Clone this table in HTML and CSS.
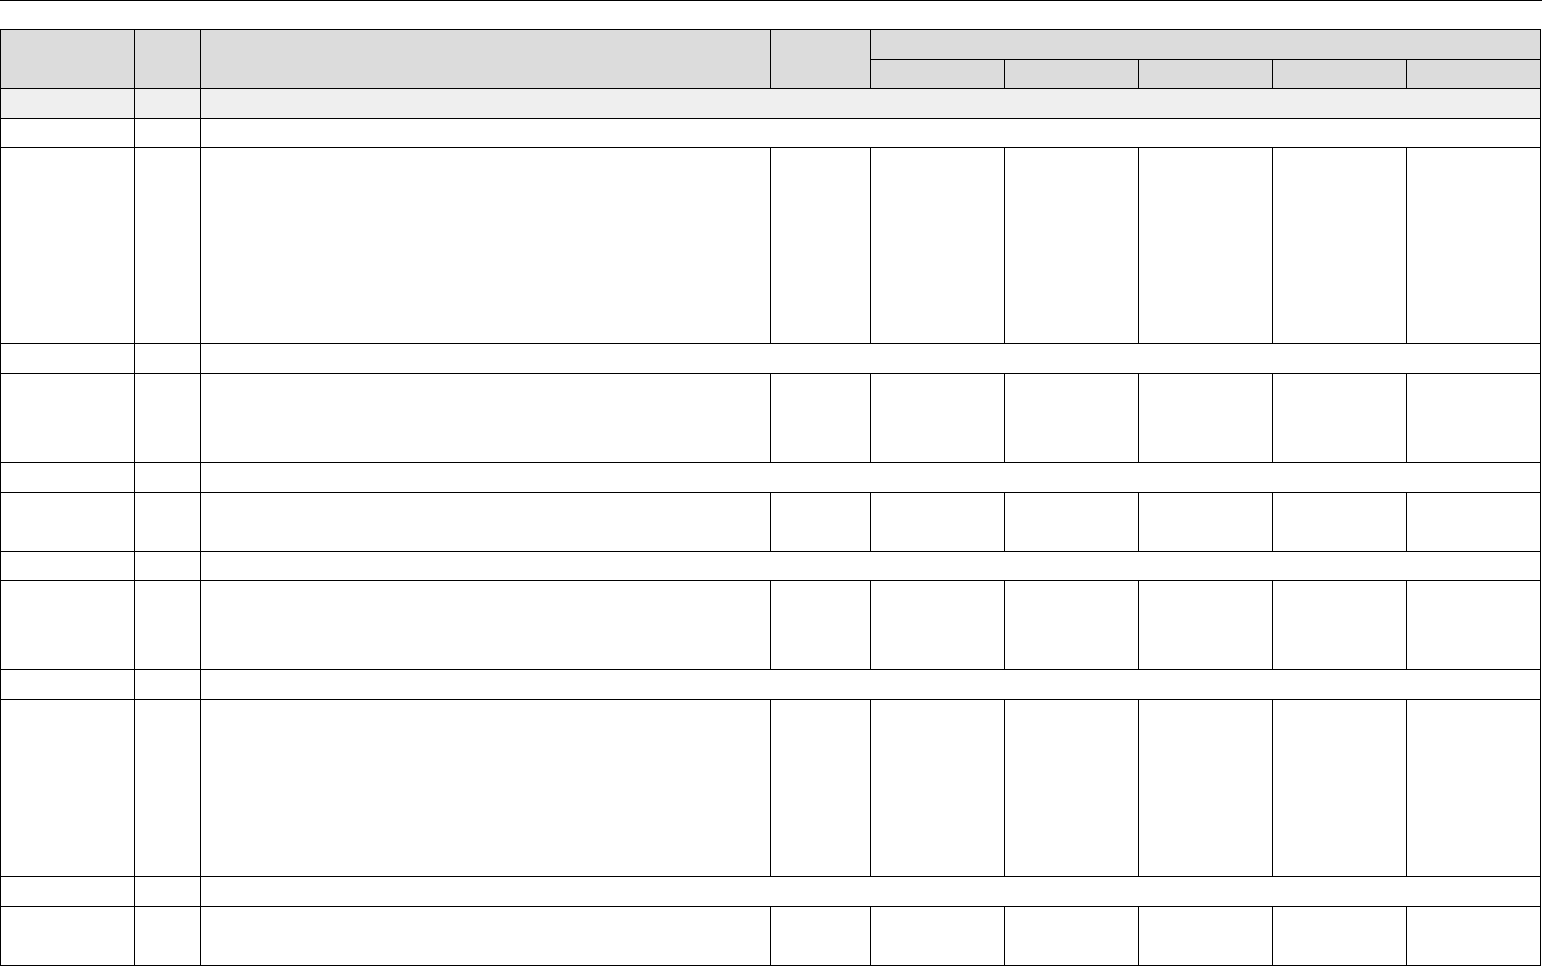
FILE: index.html
```html
<!DOCTYPE html>
<html lang="en">
<head>
<meta charset="utf-8">
<title>Table</title>
<link rel="stylesheet" href="styles.css">
</head>
<body>
<div class="rule"></div>
<table class="grid">
  <colgroup>
    <col class="c-a"><col class="c-b"><col class="c-c"><col class="c-d">
    <col class="c-e"><col class="c-e"><col class="c-e"><col class="c-e"><col class="c-e">
  </colgroup>
  <thead>
    <tr class="h1">
      <th rowspan="2"></th><th rowspan="2"></th><th rowspan="2"></th><th rowspan="2"></th>
      <th colspan="5"></th>
    </tr>
    <tr class="h2">
      <th></th><th></th><th></th><th></th><th></th>
    </tr>
  </thead>
  <tbody>
    <tr class="group r30"><td></td><td></td><td colspan="7"></td></tr>
    <tr class="section r29"><td></td><td></td><td colspan="7"></td></tr>
    <tr class="r196"><td></td><td></td><td></td><td></td><td></td><td></td><td></td><td></td><td></td></tr>
    <tr class="section r30"><td></td><td></td><td colspan="7"></td></tr>
    <tr class="r89"><td></td><td></td><td></td><td></td><td></td><td></td><td></td><td></td><td></td></tr>
    <tr class="section r30"><td></td><td></td><td colspan="7"></td></tr>
    <tr class="r59"><td></td><td></td><td></td><td></td><td></td><td></td><td></td><td></td><td></td></tr>
    <tr class="section r29"><td></td><td></td><td colspan="7"></td></tr>
    <tr class="r89"><td></td><td></td><td></td><td></td><td></td><td></td><td></td><td></td><td></td></tr>
    <tr class="section r30"><td></td><td></td><td colspan="7"></td></tr>
    <tr class="r177"><td></td><td></td><td></td><td></td><td></td><td></td><td></td><td></td><td></td></tr>
    <tr class="section r30"><td></td><td></td><td colspan="7"></td></tr>
    <tr class="r59"><td></td><td></td><td></td><td></td><td></td><td></td><td></td><td></td><td></td></tr>
  </tbody>
</table>
</body>
</html>
```
FILE: styles.css
```css
html, body {
  margin: 0;
  padding: 0;
  background: #ffffff;
  font-family: "Liberation Sans", Arial, sans-serif;
  font-size: 13px;
}

.rule {
  width: 1542px;
  height: 0;
  border-top: 1px solid #000000;
}

.grid {
  margin-top: 28px;
  border-collapse: collapse;
  table-layout: fixed;
  width: 1541px;
}

.grid th,
.grid td {
  border: 1px solid #000000;
  padding: 0;
}

.grid th {
  background: #dcdcdc;
}

.c-a { width: 134px; }
.c-b { width: 66px; }
.c-c { width: 570px; }
.c-d { width: 100px; }
.c-e { width: 134px; }

.h1 { height: 30px; }
.h2 { height: 29px; }

.group td { background: #efefef; }

.r29 { height: 29px; }
.r30 { height: 30px; }
.r59 { height: 59px; }
.r89 { height: 89px; }
.r177 { height: 177px; }
.r196 { height: 196px; }
```
